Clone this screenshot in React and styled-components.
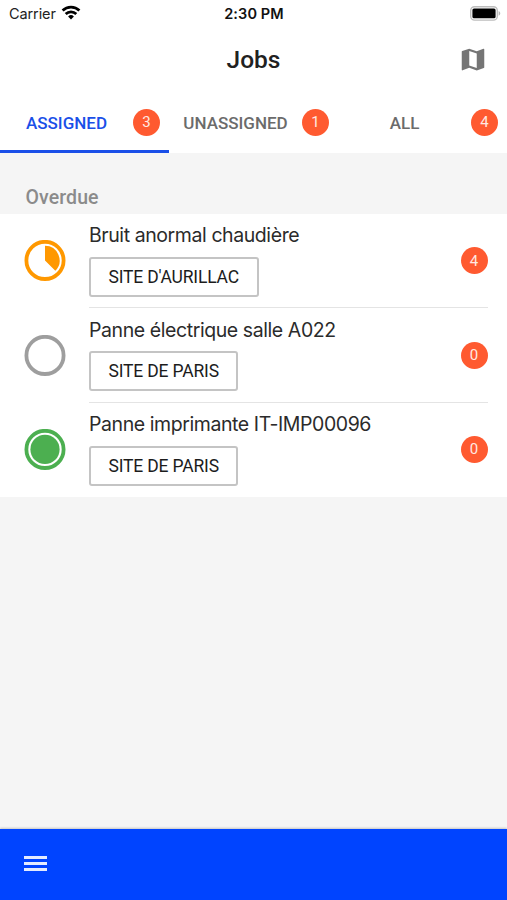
import React from "react";
import styled, { createGlobalStyle } from "styled-components";

const tabs = [
  { label: "Assigned", count: 3 },
  { label: "Unassigned", count: 1 },
  { label: "All", count: 4 },
];

const jobs = [
  { title: "Bruit anormal chaudière", site: "Site d'Aurillac", status: "started", count: 4 },
  { title: "Panne électrique salle A022", site: "Site de Paris", status: "todo", count: 0 },
  { title: "Panne imprimante IT-IMP00096", site: "Site de Paris", status: "done", count: 0 },
];

function WifiIcon() {
  return (
    <svg width="20" height="16" viewBox="0 0 20 16">
      <g fill="none" stroke="#000" strokeWidth="2.7">
        <path d="M1.6 6.5a11.9 11.9 0 0 1 16.8 0" />
        <path d="M4.7 10a7.5 7.5 0 0 1 10.6 0" />
      </g>
      <path d="M10 15.4 7.1 12.5a4.2 4.2 0 0 1 5.8 0z" />
    </svg>
  );
}

function BatteryIcon() {
  return (
    <svg width="31" height="15" viewBox="0 0 31 15">
      <rect x="0.7" y="0.7" width="26.6" height="13.4" rx="3.9" fill="#fff" stroke="#bdbdbd" strokeWidth="1.4" />
      <rect x="2.4" y="2.5" width="23.2" height="9.8" rx="1.6" />
      <path d="M28.6 5c2.2.9 2.2 3.9 0 4.8z" fill="#b5b5b5" />
    </svg>
  );
}

function MapIcon() {
  return (
    <svg width="30" height="29" viewBox="0 0 24 24" preserveAspectRatio="none" fill="#757575">
      <path d="m20.5 3-.16.03L15 5.1 9 3 3.36 4.9c-.21.07-.36.25-.36.48V20.5c0 .28.22.5.5.5l.16-.03L9 18.9l6 2.1 5.64-1.9c.21-.07.36-.25.36-.48V3.5c0-.28-.22-.5-.5-.5zM15 19l-6-2.11V5l6 2.11V19z" />
    </svg>
  );
}

function StatusIcon({ status }) {
  const color = { started: "#ff9800", todo: "#9e9e9e", done: "#4caf50" }[status];
  return (
    <svg width="42" height="42" viewBox="0 0 42 42">
      <circle cx="21" cy="20.4" r="18.6" fill="none" stroke={color} strokeWidth="3.8" />
      {status === "started" && <path d="M21 20.4V5.8a14.6 14.6 0 0 1 10.3 24.9z" fill={color} />}
      {status === "done" && <circle cx="21" cy="20.4" r="14.6" fill={color} />}
    </svg>
  );
}

function App() {
  return (
    <Screen>
      <GlobalStyle />
      <StatusBar>
        <Carrier>
          Carrier <WifiIcon />
        </Carrier>
        <Clock>2:30 PM</Clock>
        <Battery>
          <BatteryIcon />
        </Battery>
      </StatusBar>
      <Header>
        <h1>Jobs</h1>
        <MapButton aria-label="Map">
          <MapIcon />
        </MapButton>
      </Header>
      <Tabs>
        {tabs.map((tab, i) => (
          <Tab key={tab.label} $active={i === 0}>
            <TabLabel>{tab.label}</TabLabel>
            <Badge>{tab.count}</Badge>
          </Tab>
        ))}
      </Tabs>
      <SectionTitle>Overdue</SectionTitle>
      <List>
        {jobs.map((job) => (
          <Job key={job.title}>
            <StatusIcon status={job.status} />
            <JobBody>
              <JobInfo>
                <JobTitle>{job.title}</JobTitle>
                <SiteButton>{job.site}</SiteButton>
              </JobInfo>
              <Badge>{job.count}</Badge>
            </JobBody>
          </Job>
        ))}
      </List>
      <BottomBar>
        <MenuButton aria-label="Menu">
          <span />
          <span />
          <span />
        </MenuButton>
      </BottomBar>
    </Screen>
  );
}

const GlobalStyle = createGlobalStyle`
*{
  box-sizing:border-box;
}
body{
  margin:0;
  font-family:Roboto, sans-serif;
}
h1, h2, h3{
  margin:0;
}
button{
  border:none;
  background:none;
  padding:0;
  font-family:inherit;
}
svg{
  display:block;
  flex:none;
}
`;

const Screen = styled.div`
display:flex;
flex-direction:column;
height:900px;
background:#f5f5f5;
overflow:hidden;
`;

const StatusBar = styled.div`
display:grid;
grid-template-columns:1fr auto 1fr;
align-items:center;
height:27px;
padding:0 6px 0 9px;
background:white;
font-family:Inter, sans-serif;
font-size:14.5px;
color:#222;
`;

const Carrier = styled.div`
display:flex;
align-items:center;
gap:5px;
letter-spacing:-0.1px;
svg{
  margin-top:-3px;
}
`;

const Clock = styled.div`
margin-left:-2px;
font-weight:600;
font-size:14.5px;
letter-spacing:0.1px;
color:#111;
`;

const Battery = styled.div`
justify-self:end;
`;

const Header = styled.header`
display:grid;
grid-template-columns:1fr auto 1fr;
align-items:center;
height:66px;
padding:0 19.5px 1px;
background:white;
h1{
  grid-column:2;
  font-size:24.5px;
  font-weight:500;
  line-height:28px;
  color:#212121;
}
`;

const MapButton = styled.button`
justify-self:end;
`;

const Tabs = styled.nav`
display:flex;
height:60px;
background:white;
`;

const Tab = styled.div`
flex:1;
display:flex;
align-items:center;
padding-top:1px;
border-bottom:3px solid ${(props) => (props.$active ? "#1a4fe8" : "transparent")};
color:${(props) => (props.$active ? "#1a4fe8" : "#6b6b6b")};
`;

const TabLabel = styled.span`
width:133px;
padding-top:2px;
text-align:center;
text-transform:uppercase;
font-size:17px;
font-weight:500;
`;

const Badge = styled.span`
flex:none;
display:flex;
align-items:center;
justify-content:center;
width:27px;
height:27px;
border-radius:50%;
background:#ff5a30;
color:#ffe9e2;
font-size:15px;
`;

const SectionTitle = styled.h2`
height:61px;
padding:33px 25.5px 0;
font-size:19.5px;
font-weight:500;
line-height:24px;
letter-spacing:0.1px;
color:#8b8b8b;
`;

const List = styled.div`
background:white;
`;

const Job = styled.div`
display:flex;
align-items:center;
gap:23px;
height:94.4px;
padding:0 19.5px 0 24px;
`;

const JobBody = styled.div`
flex:1;
display:flex;
align-items:center;
justify-content:space-between;
height:100%;
border-bottom:1.5px solid #e4e4e4;
${Job}:last-child &{
  border-color:transparent;
}
`;

const JobInfo = styled.div`
display:flex;
flex-direction:column;
align-items:flex-start;
gap:9.5px;
margin-top:-1px;
`;

const JobTitle = styled.h3`
font-family:Inter, sans-serif;
font-size:19.5px;
font-weight:400;
line-height:24px;
letter-spacing:-0.42px;
color:#2b2b2b;
`;

const SiteButton = styled.button`
height:40px;
padding:0 17.5px;
border:2px solid #c4c4c4;
border-radius:3px;
background:white;
text-transform:uppercase;
font-size:17.5px;
letter-spacing:-0.17px;
color:#1c1c1c;
`;

const BottomBar = styled.footer`
display:flex;
height:71px;
margin-top:auto;
padding:27px 24px 0;
background:#0044ff;
box-shadow:0 -1px 2px rgba(0, 0, 0, 0.2);
`;

const MenuButton = styled.button`
display:flex;
flex-direction:column;
gap:3px;
width:23px;
height:15px;
span{
  width:100%;
  height:3px;
  background:#e3ebff;
}
`;

export default App;
